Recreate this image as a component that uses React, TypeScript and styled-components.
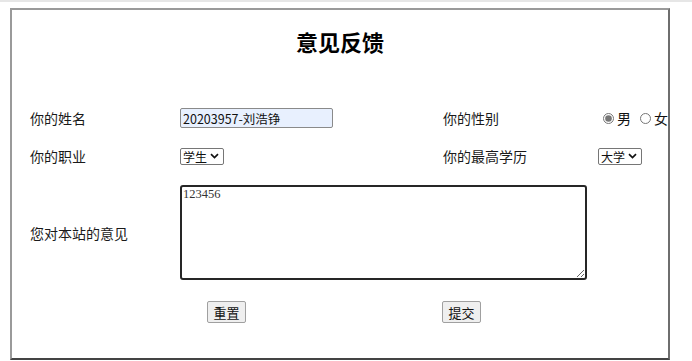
import React from "react";
import styled, { createGlobalStyle } from "styled-components";

const Global = createGlobalStyle`
  html, body { margin: 0; padding: 0; background: #fff; }
  body { font-family: "Noto Sans CJK SC", "Noto Sans", sans-serif; color: #111; }
`;

const chevron =
  "data:image/svg+xml;utf8," +
  encodeURIComponent(
    '<svg xmlns="http://www.w3.org/2000/svg" width="9" height="6" viewBox="0 0 9 6"><path d="M1 1.2 L4.5 4.6 L8 1.2" fill="none" stroke="#111" stroke-width="1.7"/></svg>'
  );

const TopBand = styled.div`
  height: 2px;
  background: #e6e6e6;
`;

const Frame = styled.div`
  margin: 6px 0 0 10px;
  width: 660px;
  box-sizing: border-box;
  border-style: solid;
  border-width: 2px;
  border-color: #9a9a9a #6e6e6e #444 #9a9a9a;
  padding-bottom: 35px;
`;

const Title = styled.h1`
  margin: 0;
  padding-top: 16px;
  height: 30px;
  line-height: 30px;
  text-align: center;
  font-size: 22px;
  font-weight: 700;
  color: #000;
`;

const Form = styled.form`
  margin-top: 47px;
  display: grid;
  grid-template-columns: 168px 263px 155px 1fr;
  grid-template-rows: 30px 30px 101px;
  row-gap: 8px;
  align-items: center;
`;

const Label = styled.label<{ $indent?: number; $nudge?: number }>`
  font-size: 14px;
  color: #1a1a1a;
  padding-left: ${(p) => p.$indent ?? 18}px;
  padding-top: ${(p) => p.$nudge ?? 0}px;
  white-space: nowrap;
`;

const TextInput = styled.input`
  width: 153px;
  height: 20px;
  box-sizing: border-box;
  border: 1px solid #8a8a8a;
  border-radius: 2px;
  background: #e8f0fe;
  padding: 0 2px;
  font-family: "Noto Sans CJK SC", "Noto Sans", sans-serif;
  font-size: 12.5px;
  color: #111;
  outline: none;
`;

const Select = styled.select`
  justify-self: start;
  appearance: none;
  -webkit-appearance: none;
  width: 44px;
  height: 17px;
  box-sizing: border-box;
  font-family: "Noto Sans CJK SC", "Noto Sans", sans-serif;
  font-size: 12px;
  line-height: 15px;
  padding: 0 0 0 2px;
  border: 1px solid #767676;
  border-radius: 2px;
  background: #fff url("${chevron}") no-repeat right 4px center;
  color: #111;
`;

const RadioGroup = styled.div`
  display: flex;
  align-items: center;
  font-size: 14px;
  white-space: nowrap;
  overflow: hidden;
`;

const Radio = styled.input`
  width: 11px;
  height: 11px;
  margin: 0 3px 0 5px;
  accent-color: #767676;
`;

const RadioText = styled.span`
  margin-right: 4px;
`;

const Comment = styled.textarea`
  grid-column: 2 / 4;
  align-self: end;
  width: 407px;
  height: 95px;
  box-sizing: border-box;
  border: 2px solid #262626;
  border-radius: 3px;
  padding: 0 1px;
  font-family: "Liberation Serif", serif;
  font-size: 12.5px;
  color: #333;
  outline: none;
  resize: both;
`;

const ButtonRow = styled.div`
  margin-top: 21px;
  display: grid;
  grid-template-columns: 195px 235px auto;
`;

const Button = styled.button<{ $col: number }>`
  width: 39px;
  height: 22px;
  padding: 0;
  box-sizing: border-box;
  border: 1px solid #a0a0a0;
  border-radius: 2px;
  background: #efefef;
  font-family: "Noto Sans CJK SC", "Noto Sans", sans-serif;
  font-size: 13px;
  color: #111;
  grid-column: ${(p) => p.$col};
`;

export default function App() {
  return (
    <>
      <Global />
      <TopBand />
      <Frame>
        <Title>意见反馈</Title>
        <Form onSubmit={(e) => e.preventDefault()}>
          <Label>你的姓名</Label>
          <TextInput defaultValue="20203957-刘浩铮" />
          <Label $indent={0}>你的性别</Label>
          <RadioGroup>
            <Radio type="radio" name="sex" defaultChecked />
            <RadioText>男</RadioText>
            <Radio type="radio" name="sex" />
            <RadioText>女</RadioText>
          </RadioGroup>

          <Label>你的职业</Label>
          <Select defaultValue="学生">
            <option>学生</option>
            <option>教师</option>
            <option>其他</option>
          </Select>
          <Label $indent={0}>你的最高学历</Label>
          <Select defaultValue="大学">
            <option>大学</option>
            <option>高中</option>
            <option>初中</option>
          </Select>

          <Label $nudge={6}>您对本站的意见</Label>
          <Comment defaultValue="123456" />
        </Form>
        <ButtonRow>
          <Button type="reset" $col={2}>重置</Button>
          <Button type="submit" $col={3}>提交</Button>
        </ButtonRow>
      </Frame>
    </>
  );
}
